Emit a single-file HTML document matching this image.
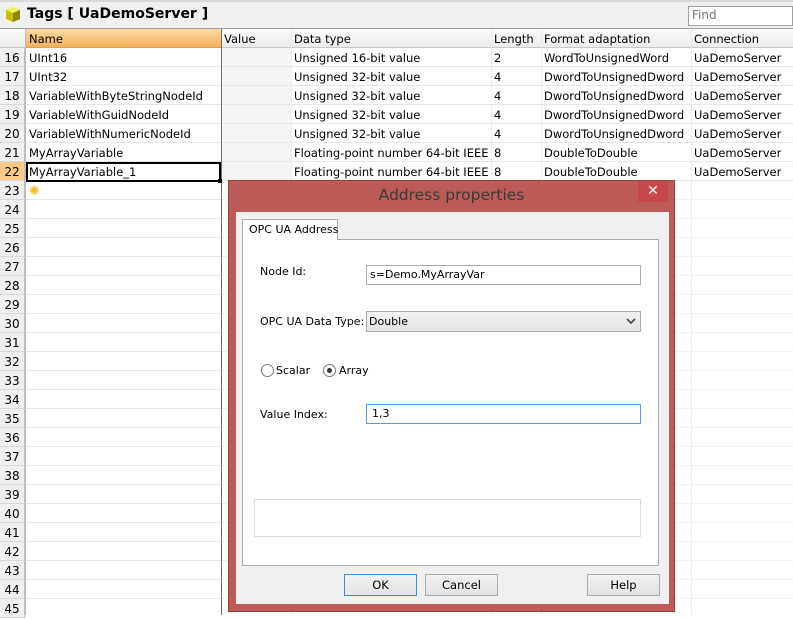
<!DOCTYPE html>
<html><head><meta charset="utf-8">
<style>
*{margin:0;padding:0;box-sizing:border-box}
body{width:793px;height:615px;overflow:hidden;background:#fff;font-family:"DejaVu Sans","Liberation Sans",sans-serif;font-size:11.5px;color:#000;position:relative}
.a{position:absolute}
.t{position:absolute;white-space:nowrap;line-height:19px;padding-top:1px}
.vl{position:absolute;top:29px;width:1px;height:586px;background:#ececec}
.num{position:absolute;left:0;width:25px;height:19px;background:#f0f0f0;border-bottom:1px solid #d8d8d8;border-right:1px solid #bdbdbd;text-align:center;line-height:20px;font-size:12px}
.dl{font-family:"DejaVu Sans",sans-serif;font-size:11px}
.btn{position:absolute;height:22px;top:574px;border:1px solid #adadad;background:linear-gradient(#f2f2f2,#e3e3e3);text-align:center;line-height:20px;font-size:11.5px}
</style></head><body>
<div class="a" style="left:0;top:0;width:793px;height:29px;background:#f0f0f0;border-top:2px solid #d9d9d9;border-bottom:1px solid #a0a0a0"></div>
<svg class="a" style="left:5px;top:6px" width="16" height="17" viewBox="0 0 16 17"><polygon points="8,1 15,4 15,13 8,16 1,13 1,4" fill="#c8c000"/><polygon points="8,1 15,4 8,7 1,4" fill="#f4f060"/><polygon points="8,7 15,4 15,13 8,16" fill="#8c8600"/></svg>
<div class="t" style="left:27px;top:5px;font-weight:bold;font-size:14px;padding:0">Tags [ UaDemoServer ]</div>
<div class="a" style="left:688px;top:6px;width:105px;height:20px;border:1px solid #a0a0a0;background:#fff"></div>
<div class="t" style="left:692px;top:6px;color:#777;font-size:12px;padding:0">Find</div>
<div class="a" style="left:0;top:29px;width:793px;height:19px;background:linear-gradient(#fafafa,#ececec);border-bottom:1px solid #c8c8c8"></div>
<div class="a" style="left:25px;top:29px;width:196px;height:19px;background:linear-gradient(#fbd9a0,#f4b25e);border-bottom:1px solid #e8a040"></div>
<div class="a" style="left:221px;top:48px;width:70px;height:133px;background:#f5f5f5"></div>
<div class="a" style="left:221px;top:66px;width:572px;height:116px;background:repeating-linear-gradient(to bottom,#e6e6e6 0,#e6e6e6 1px,transparent 1px,transparent 19px)"></div>
<div class="a" style="left:221px;top:199px;width:572px;height:416px;background:repeating-linear-gradient(to bottom,#f3f3f3 0,#f3f3f3 1px,transparent 1px,transparent 19px)"></div>
<div class="a" style="left:25px;top:66px;width:196px;height:549px;background:repeating-linear-gradient(to bottom,#e6e6e6 0,#e6e6e6 1px,transparent 1px,transparent 19px)"></div>
<div class="vl" style="left:25px;background:#bdbdbd"></div>
<div class="vl" style="left:221px;background:#707070"></div>
<div class="vl" style="left:291px"></div>
<div class="vl" style="left:491px"></div>
<div class="vl" style="left:541px"></div>
<div class="vl" style="left:691px"></div>
<div class="t" style="left:29px;top:29px">Name</div>
<div class="t" style="left:224px;top:29px">Value</div>
<div class="t" style="left:294px;top:29px">Data type</div>
<div class="t" style="left:494px;top:29px">Length</div>
<div class="t" style="left:544px;top:29px">Format adaptation</div>
<div class="t" style="left:694px;top:29px">Connection</div>
<div class="num" style="top:48px">16</div><div class="num" style="top:67px">17</div><div class="num" style="top:86px">18</div><div class="num" style="top:105px">19</div><div class="num" style="top:124px">20</div><div class="num" style="top:143px">21</div>
<div class="num" style="top:162px;background:#f9c98a">22</div>
<div class="num" style="top:181px">23</div><div class="num" style="top:200px">24</div><div class="num" style="top:219px">25</div><div class="num" style="top:238px">26</div><div class="num" style="top:257px">27</div><div class="num" style="top:276px">28</div><div class="num" style="top:295px">29</div><div class="num" style="top:314px">30</div><div class="num" style="top:333px">31</div><div class="num" style="top:352px">32</div><div class="num" style="top:371px">33</div><div class="num" style="top:390px">34</div><div class="num" style="top:409px">35</div><div class="num" style="top:428px">36</div><div class="num" style="top:447px">37</div><div class="num" style="top:466px">38</div><div class="num" style="top:485px">39</div><div class="num" style="top:504px">40</div><div class="num" style="top:523px">41</div><div class="num" style="top:542px">42</div><div class="num" style="top:561px">43</div><div class="num" style="top:580px">44</div><div class="num" style="top:599px">45</div>
<div class="t" style="left:29px;top:48px">UInt16</div><div class="t" style="left:294px;top:48px">Unsigned 16-bit value</div><div class="t" style="left:494px;top:48px">2</div><div class="t" style="left:544px;top:48px">WordToUnsignedWord</div><div class="t" style="left:694px;top:48px">UaDemoServer</div>
<div class="t" style="left:29px;top:67px">UInt32</div><div class="t" style="left:294px;top:67px">Unsigned 32-bit value</div><div class="t" style="left:494px;top:67px">4</div><div class="t" style="left:544px;top:67px">DwordToUnsignedDword</div><div class="t" style="left:694px;top:67px">UaDemoServer</div>
<div class="t" style="left:29px;top:86px">VariableWithByteStringNodeId</div><div class="t" style="left:294px;top:86px">Unsigned 32-bit value</div><div class="t" style="left:494px;top:86px">4</div><div class="t" style="left:544px;top:86px">DwordToUnsignedDword</div><div class="t" style="left:694px;top:86px">UaDemoServer</div>
<div class="t" style="left:29px;top:105px">VariableWithGuidNodeId</div><div class="t" style="left:294px;top:105px">Unsigned 32-bit value</div><div class="t" style="left:494px;top:105px">4</div><div class="t" style="left:544px;top:105px">DwordToUnsignedDword</div><div class="t" style="left:694px;top:105px">UaDemoServer</div>
<div class="t" style="left:29px;top:124px">VariableWithNumericNodeId</div><div class="t" style="left:294px;top:124px">Unsigned 32-bit value</div><div class="t" style="left:494px;top:124px">4</div><div class="t" style="left:544px;top:124px">DwordToUnsignedDword</div><div class="t" style="left:694px;top:124px">UaDemoServer</div>
<div class="t" style="left:29px;top:143px">MyArrayVariable</div><div class="t" style="left:294px;top:143px;width:196px;overflow:hidden">Floating-point number 64-bit IEEE</div><div class="t" style="left:494px;top:143px">8</div><div class="t" style="left:544px;top:143px">DoubleToDouble</div><div class="t" style="left:694px;top:143px">UaDemoServer</div>
<div class="t" style="left:29px;top:162px">MyArrayVariable_1</div><div class="t" style="left:294px;top:162px;width:196px;overflow:hidden">Floating-point number 64-bit IEEE</div><div class="t" style="left:494px;top:162px">8</div><div class="t" style="left:544px;top:162px">DoubleToDouble</div><div class="t" style="left:694px;top:162px">UaDemoServer</div>
<div class="a" style="left:26px;top:162px;width:195px;height:20px;border:2px solid #000"></div>
<div class="a" style="left:218px;top:179px;width:4px;height:4px;background:#000"></div>
<div class="t" style="left:29px;top:181px;color:#f0c020;font-size:13px">✺</div>
<div class="a" style="left:228px;top:180px;width:447px;height:432px;background:#bd5a5a;border:1px solid #9a4040"></div>
<div class="a" style="left:638px;top:181px;width:30px;height:21px;background:#c74848;color:#fff;text-align:center;font-size:14px;line-height:21px">✕</div>
<div class="t" style="left:228px;top:186px;width:447px;text-align:center;font-size:15.5px;color:#3a3a3a;padding:0">Address properties</div>
<div class="a" style="left:236px;top:212px;width:433px;height:392px;background:#f0f0f0"></div>
<div class="a" style="left:242px;top:239px;width:417px;height:327px;background:#fff;border:1px solid #adadad"></div>
<div class="a" style="left:242px;top:219px;width:96px;height:21px;background:#fff;border:1px solid #adadad;border-bottom:none"></div>
<div class="t dl" style="left:249px;top:219px">OPC UA Address</div>
<div class="t dl" style="left:260px;top:261px">Node Id:</div>
<div class="a" style="left:366px;top:265px;width:275px;height:20px;border:1px solid #acacac"></div>
<div class="t dl" style="left:370px;top:264px">s=Demo.MyArrayVar</div>
<div class="t dl" style="left:260px;top:311px">OPC UA Data Type:</div>
<div class="a" style="left:366px;top:311px;width:275px;height:21px;border:1px solid #acacac;background:linear-gradient(#f2f2f2,#e5e5e5)"></div>
<div class="t dl" style="left:369px;top:311px">Double</div>
<svg class="a" style="left:626px;top:318px" width="10" height="7"><path d="M1 1 L5 5 L9 1" stroke="#444" stroke-width="1.6" fill="none"/></svg>
<div class="a" style="left:261px;top:364px;width:13px;height:13px;border:1px solid #777;border-radius:50%;background:#fff"></div>
<div class="t dl" style="left:276px;top:360px">Scalar</div>
<div class="a" style="left:323px;top:364px;width:13px;height:13px;border:1px solid #777;border-radius:50%;background:#fff"></div>
<div class="a" style="left:327px;top:368px;width:5px;height:5px;border-radius:50%;background:#333"></div>
<div class="t dl" style="left:339px;top:360px">Array</div>
<div class="t dl" style="left:260px;top:404px">Value Index:</div>
<div class="a" style="left:366px;top:404px;width:275px;height:20px;border:1px solid #569de5"></div>
<div class="t dl" style="left:372px;top:403px">1,3</div>
<div class="a" style="left:254px;top:499px;width:387px;height:38px;border:1px solid #dcdcdc"></div>
<div class="btn" style="left:344px;width:73px;border-color:#3c8fdc">OK</div>
<div class="btn" style="left:425px;width:73px">Cancel</div>
<div class="btn" style="left:587px;width:73px">Help</div>
</body></html>
